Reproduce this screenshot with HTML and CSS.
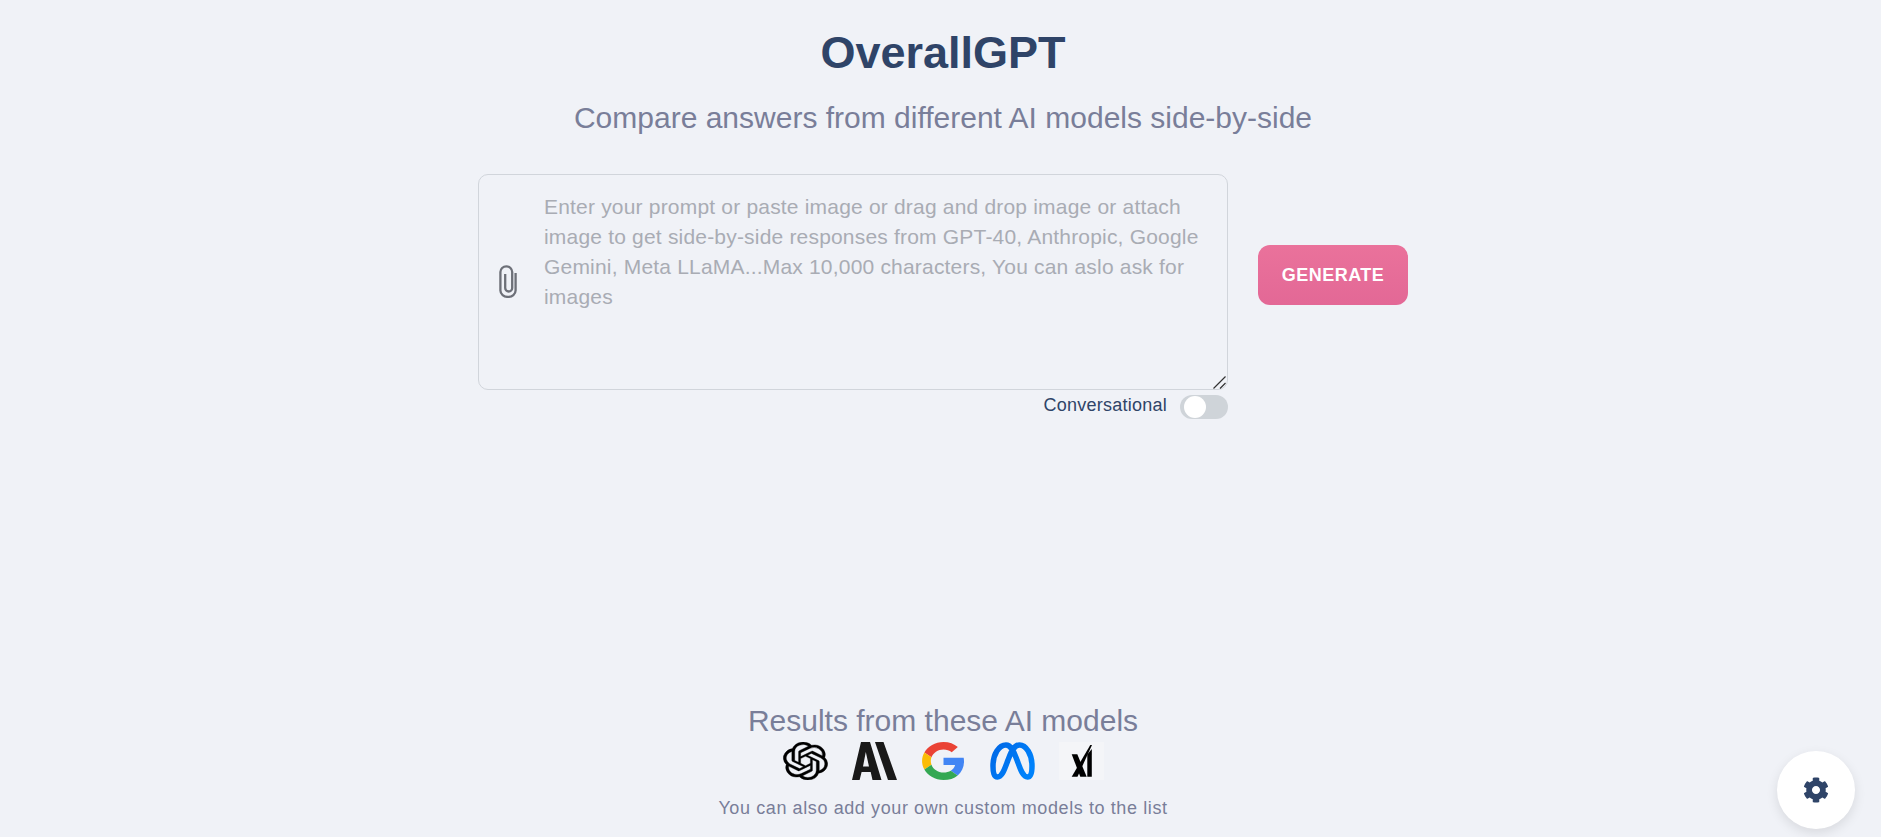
FILE: index.html
```html
<!DOCTYPE html>
<html lang="en">
<head>
<meta charset="utf-8">
<title>OverallGPT</title>
<link rel="stylesheet" href="styles.css">
</head>
<body>
<main class="page">
  <header class="hero">
    <h1 class="title">OverallGPT</h1>
    <p class="subtitle">Compare answers from different AI models side-by-side</p>
  </header>
  <section class="composer">
    <div class="prompt-col">
      <div class="prompt-box">
        <textarea class="prompt" placeholder="Enter your prompt or paste image or drag and drop image or attach image to get side-by-side responses from GPT-40, Anthropic, Google Gemini, Meta LLaMA...Max 10,000 characters, You can aslo ask for images"></textarea>
        <svg class="clip" viewBox="0 0 18 33" aria-hidden="true"><path d="M16.6 8V25.5a7.6 6.4 0 0 1-15.2 0V7a5.9 5.7 0 0 1 11.8 0V23a3.5 3.5 0 0 1-7 0V9"/></svg>
        <svg class="grip" viewBox="0 0 13 13" aria-hidden="true"><path d="M0.500 12.500L12.500 0.500M7 12.500L12.500 7"/></svg>
      </div>
      <div class="mode">
        <span class="mode-label">Conversational</span>
        <span class="toggle"><span class="knob"></span></span>
      </div>
    </div>
    <button class="generate" type="button">GENERATE</button>
  </section>
  <footer class="models">
    <h2 class="models-title">Results from these AI models</h2>
    <div class="logos">
      <svg class="logo" viewBox="0 0 24 24" preserveAspectRatio="none" aria-label="OpenAI"><path fill="#000" stroke="#000" stroke-width="0.200" d="M22.2819 9.8211a5.9847 5.9847 0 0 0-.5157-4.9108 6.0462 6.0462 0 0 0-6.5098-2.9A6.0651 6.0651 0 0 0 4.9807 4.1818a5.9847 5.9847 0 0 0-3.9977 2.9 6.0462 6.0462 0 0 0 .7427 7.0966 5.98 5.98 0 0 0 .511 4.9107 6.051 6.051 0 0 0 6.5146 2.9001A5.9847 5.9847 0 0 0 13.2599 24a6.0557 6.0557 0 0 0 5.7718-4.2058 5.9894 5.9894 0 0 0 3.9977-2.9001 6.0557 6.0557 0 0 0-.7475-7.0729zm-9.022 12.6081a4.4755 4.4755 0 0 1-2.8764-1.0408l.1419-.0804 4.7783-2.7582a.7948.7948 0 0 0 .3927-.6813v-6.7369l2.02 1.1686a.071.071 0 0 1 .038.052v5.5826a4.504 4.504 0 0 1-4.4945 4.4944zm-9.6607-4.1254a4.4708 4.4708 0 0 1-.5346-3.0137l.142.0852 4.783 2.7582a.7712.7712 0 0 0 .7806 0l5.8428-3.3685v2.3324a.0804.0804 0 0 1-.0332.0615L9.74 19.9502a4.4992 4.4992 0 0 1-6.1408-1.6464zM2.3408 7.8956a4.485 4.485 0 0 1 2.3655-1.9728V11.6a.7664.7664 0 0 0 .3879.6765l5.8144 3.3543-2.0201 1.1685a.0757.0757 0 0 1-.071 0l-4.8303-2.7865A4.504 4.504 0 0 1 2.3408 7.872zm16.5963 3.8558L13.1038 8.364 15.1192 7.2a.0757.0757 0 0 1 .071 0l4.8303 2.7913a4.4944 4.4944 0 0 1-.6765 8.1042v-5.6772a.79.79 0 0 0-.407-.667zm2.0107-3.0231l-.142-.0852-4.7735-2.7818a.7759.7759 0 0 0-.7854 0L9.409 9.2297V6.8974a.0662.0662 0 0 1 .0284-.0615l4.8303-2.7866a4.4992 4.4992 0 0 1 6.6802 4.66zM8.3065 12.863l-2.02-1.1638a.0804.0804 0 0 1-.038-.0567V6.0742a4.4992 4.4992 0 0 1 7.3757-3.4537l-.142.0805L8.704 5.459a.7948.7948 0 0 0-.3927.6813zm1.0976-2.3654l2.602-1.4998 2.6069 1.4998v2.9994l-2.5974 1.4997-2.6067-1.4997Z"/></svg>
      <svg class="logo" viewBox="0 0 45 38" aria-label="Anthropic"><path fill="#191919" fill-rule="evenodd" d="M0 38L9 0H18L29.500 38H20.500L18.700 30H9.600L7.600 38ZM11 24.500H17L13.800 10Z"/><path fill="#191919" d="M23 0H31.500L45 38H36Z"/></svg>
      <svg class="logo" viewBox="-1.200 0 50.400 48" preserveAspectRatio="none" aria-label="Google"><path fill="#EA4335" d="M24 9.500c3.540 0 6.710 1.220 9.210 3.600l6.850-6.850C35.900 2.380 30.470 0 24 0 14.620 0 6.510 5.380 2.560 13.220l7.980 6.190C12.430 13.720 17.740 9.500 24 9.500z"/><path fill="#4285F4" d="M46.980 24.550c0-1.570-.15-3.090-.38-4.550H24v9.020h12.940c-.58 2.960-2.260 5.480-4.780 7.180l7.730 6c4.510-4.180 7.090-10.360 7.090-17.650z"/><path fill="#FBBC05" d="M10.530 28.590c-.48-1.450-.76-2.990-.76-4.590s.27-3.140.76-4.590l-7.980-6.190C.92 16.460 0 20.120 0 24c0 3.880.92 7.540 2.560 10.780l7.970-6.190z"/><path fill="#34A853" d="M24 48c6.480 0 11.930-2.130 15.890-5.810l-7.730-6c-2.150 1.450-4.920 2.300-8.160 2.300-6.260 0-11.570-4.220-13.470-9.910l-7.980 6.190C6.510 42.620 14.620 48 24 48z"/></svg>
      <svg class="logo" viewBox="0 0 45 38" aria-label="Meta"><defs><linearGradient id="metaGrad" x1="0" y1="0" x2="1" y2="0.600"><stop offset="0" stop-color="#0068e6"/><stop offset="1" stop-color="#0082fb"/></linearGradient></defs><path fill="none" stroke="url(#metaGrad)" stroke-width="5.500" d="M3 24C3 12 9 3 16 3C22 3 24.500 12 27 18C30 26 32.500 35 37.500 35C41 35 42 30 42 24C42 12 36 3 29.500 3C23 3 20.500 12 18 18C15 26 12.500 35 7.500 35C4 35 3 30 3 24Z"/></svg>
      <svg class="logo logo-xai" viewBox="0 0 45 38" aria-label="xAI"><path fill="#000" d="M12.700 12.300H18.300L27.700 34.700H21.300Z"/><path fill="#000" d="M12.700 34.700H18.500L33 3H31.300Z"/><path fill="#000" d="M28.300 12.500L32.800 7V34.700H28.300Z"/></svg>
    </div>
    <p class="models-note">You can also add your own custom models to the list</p>
  </footer>
</main>
<button class="settings" type="button" aria-label="Settings">
  <svg class="gear" viewBox="0 0 512 512" aria-hidden="true"><path d="M487.400 315.700l-42.600-24.600c4.300-23.200 4.300-47 0-70.200l42.600-24.600c4.900-2.800 7.100-8.600 5.500-14-11.100-35.600-30-67.800-54.700-94.600-3.800-4.100-10-5.100-14.800-2.300L380.800 110c-17.900-15.400-38.500-27.300-60.800-35.100V25.800c0-5.600-3.900-10.500-9.400-11.700-36.700-8.200-74.300-7.800-109.200 0-5.500 1.200-9.400 6.100-9.400 11.700V75c-22.200 7.900-42.800 19.800-60.800 35.100L88.700 85.500c-4.900-2.800-11-1.900-14.800 2.300-24.700 26.700-43.600 58.900-54.700 94.600-1.700 5.400.6 11.200 5.500 14L67.300 221c-4.300 23.200-4.300 47 0 70.200l-42.600 24.600c-4.900 2.800-7.100 8.600-5.500 14 11.100 35.600 30 67.800 54.700 94.600 3.800 4.100 10 5.100 14.800 2.300l42.600-24.600c17.900 15.400 38.500 27.300 60.800 35.100v49.200c0 5.600 3.900 10.500 9.400 11.700 36.700 8.200 74.300 7.800 109.200 0 5.500-1.200 9.400-6.100 9.400-11.700v-49.200c22.200-7.900 42.800-19.800 60.800-35.100l42.600 24.600c4.900 2.800 11 1.900 14.800-2.300 24.700-26.700 43.600-58.900 54.700-94.600 1.500-5.500-.7-11.300-5.600-14.100zM256 336c-44.100 0-80-35.900-80-80s35.900-80 80-80 80 35.900 80 80-35.900 80-80 80z"/></svg>
</button>
</body>
</html>
```
FILE: styles.css
```css
* { box-sizing: border-box; }
html, body { margin: 0; height: 100%; }
body {
  background: #f0f2f7;
  font-family: "Liberation Sans", Arial, sans-serif;
  overflow: hidden;
}
.page {
  height: 837px;
  padding: 28px 0 18px 5px;
  display: flex;
  flex-direction: column;
  align-items: center;
}
.hero { text-align: center; }
.title {
  margin: 0;
  font-size: 45px;
  line-height: 50px;
  font-weight: 700;
  color: #2f4468;
}
.subtitle {
  margin: 22px 0 0;
  font-size: 30px;
  line-height: 36px;
  color: #797e99;
}
.composer {
  margin-top: 38px;
  display: flex;
  align-items: flex-start;
  gap: 30px;
}
.prompt-col { width: 750px; }
.prompt-box { position: relative; display: flex; }
.prompt {
  width: 750px;
  height: 216px;
  padding: 17px 20px 17px 65px;
  border: 1px solid #d1d5db;
  border-radius: 10px;
  background: transparent;
  font: 21px/30px "Liberation Sans", Arial, sans-serif;
  letter-spacing: 0.19px;
  color: #333;
  outline: none;
  resize: none;
}
.prompt::placeholder { color: #a9acb4; opacity: 1; }
.clip {
  position: absolute;
  left: 21px;
  top: 91px;
  width: 18px;
  height: 33px;
  fill: none;
  stroke: #6d7078;
  stroke-width: 2.300;
}
.grip {
  position: absolute;
  right: 2px;
  bottom: 1px;
  width: 13px;
  height: 13px;
  fill: none;
  stroke: #333;
  stroke-width: 1.200;
}
.mode {
  margin-top: 5px;
  display: flex;
  justify-content: flex-end;
  align-items: center;
  gap: 13px;
}
.mode-label { font-size: 18px; line-height: 20px; padding-bottom: 4px; letter-spacing: 0.25px; color: #2f4468; }
.toggle {
  width: 48px;
  height: 24px;
  padding: 1px 4px;
  border-radius: 12px;
  background: #cfd4d9;
  display: flex;
}
.knob { width: 22px; height: 22px; border-radius: 50%; background: #fff; }
.generate {
  margin-top: 71px;
  width: 150px;
  height: 60px;
  border: 0;
  border-radius: 12px;
  background: linear-gradient(180deg, #ea729b, #e36896);
  color: #fff;
  font: 700 18px "Liberation Sans", Arial, sans-serif;
  letter-spacing: 0.5px;
}
.models { margin-top: auto; text-align: center; }
.models-title {
  margin: 0;
  font-size: 30px;
  line-height: 36px;
  font-weight: 400;
  color: #797e99;
  position: relative;
  top: 1px;
}
.logos {
  margin-top: 4px;
  margin-left: 2px;
  display: flex;
  justify-content: center;
  gap: 24px;
}
.logo { width: 45px; height: 38px; display: block; }
.logo-xai { background: #f4f5f8; }
.models-note {
  margin: 17px 0 0;
  font-size: 18px;
  line-height: 22px;
  letter-spacing: 0.6px;
  color: #797e99;
}
.settings {
  position: fixed;
  right: 26px;
  bottom: 8px;
  width: 78px;
  height: 78px;
  border: 0;
  padding: 0;
  border-radius: 50%;
  background: #fff;
  box-shadow: 0 4px 12px rgba(0, 0, 0, 0.1);
  display: flex;
  align-items: center;
  justify-content: center;
}
.gear { width: 26px; height: 26px; fill: #2f4468; }
```
